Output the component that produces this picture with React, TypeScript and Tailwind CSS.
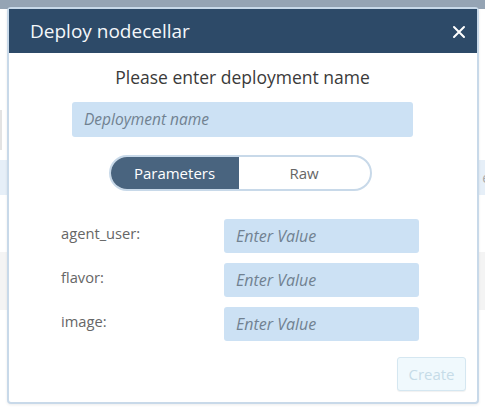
import React from "react";

export default function App() {
  const rows = ["agent_user:", "flavor:", "image:"];
  return (
    <div className="relative w-[485px] h-[410px] overflow-hidden bg-white" style={{ fontFamily: '"Open Sans", sans-serif' }}>
      {/* background page */}
      <div className="h-[9px] bg-[#95a4b4]" />
      <div className="mt-[101px] h-[40px] w-[2px] bg-[#e3e3e3]" />
      <div className="mt-[10px] h-[35px] bg-[#e6eff8] flex justify-end items-center text-[14px] text-[#aaa]">
        <span className="-mr-[5px]">e</span>
      </div>
      <div className="mt-[57px] h-[58px] bg-[#f4f4f4]" />

      {/* modal */}
      <div className="absolute left-[7px] top-[7px] w-[472px] h-[397px] bg-white border-2 border-[#c8d9e9] rounded-[4px] flex flex-col shadow-[0_1px_3px_rgba(0,0,0,0.08)]">
        <div className="h-[44px] bg-[#2d4a68] flex items-center justify-between pl-[21px] pr-[11px]">
          <span className="text-[#f4f7fa] text-[19px]">Deploy nodecellar</span>
          <svg width="14" height="14" viewBox="0 0 14 14" className="mt-[2px]">
            <path d="M2 2 L12 12 M12 2 L2 12" stroke="white" strokeWidth="2" strokeLinecap="round" />
          </svg>
        </div>
        <div className="flex flex-col items-center">
          <div className="mt-[12px] text-[17.5px] text-[#3a3a3a] leading-[24px] -ml-[1px]">Please enter deployment name</div>
          <div className="mt-[13px] w-[341px] h-[35px] bg-[#cce1f4] rounded-[3px] flex items-center pl-[12px] text-[15.5px] italic text-[#718191] -ml-[1px]">
            Deployment name
          </div>
          <div className="mt-[18px] w-[263px] h-[36px] rounded-full border-2 border-[#c8d9e9] flex overflow-hidden -ml-[6px]">
            <div className="w-[128px] bg-[#49647f] text-white text-[15px] flex items-center justify-center">Parameters</div>
            <div className="flex-1 text-[#666] text-[15px] flex items-center justify-center">Raw</div>
          </div>
        </div>
        <div className="mt-[28px] flex flex-col gap-[10px]">
          {rows.map((r) => (
            <div key={r} className="flex items-start">
              <div className="w-[215px] pl-[52px] text-[14.7px] text-[#666] leading-[20px] pt-[4px]">{r}</div>
              <div className="w-[195px] h-[34px] bg-[#cce1f4] rounded-[3px] flex items-center pl-[12px] text-[16px] italic text-[#718191]">
                Enter Value
              </div>
            </div>
          ))}
        </div>
        <div className="flex justify-end pr-[11px] mt-[16px]">
          <div className="w-[69px] h-[34px] bg-[#f0f9fd] border border-[#d5e7f1] rounded-[3px] flex items-center justify-center text-[15px] text-[#c6dce8] shadow-[0_1px_1px_rgba(0,0,0,0.06)]">
            Create
          </div>
        </div>
      </div>
    </div>
  );
}
